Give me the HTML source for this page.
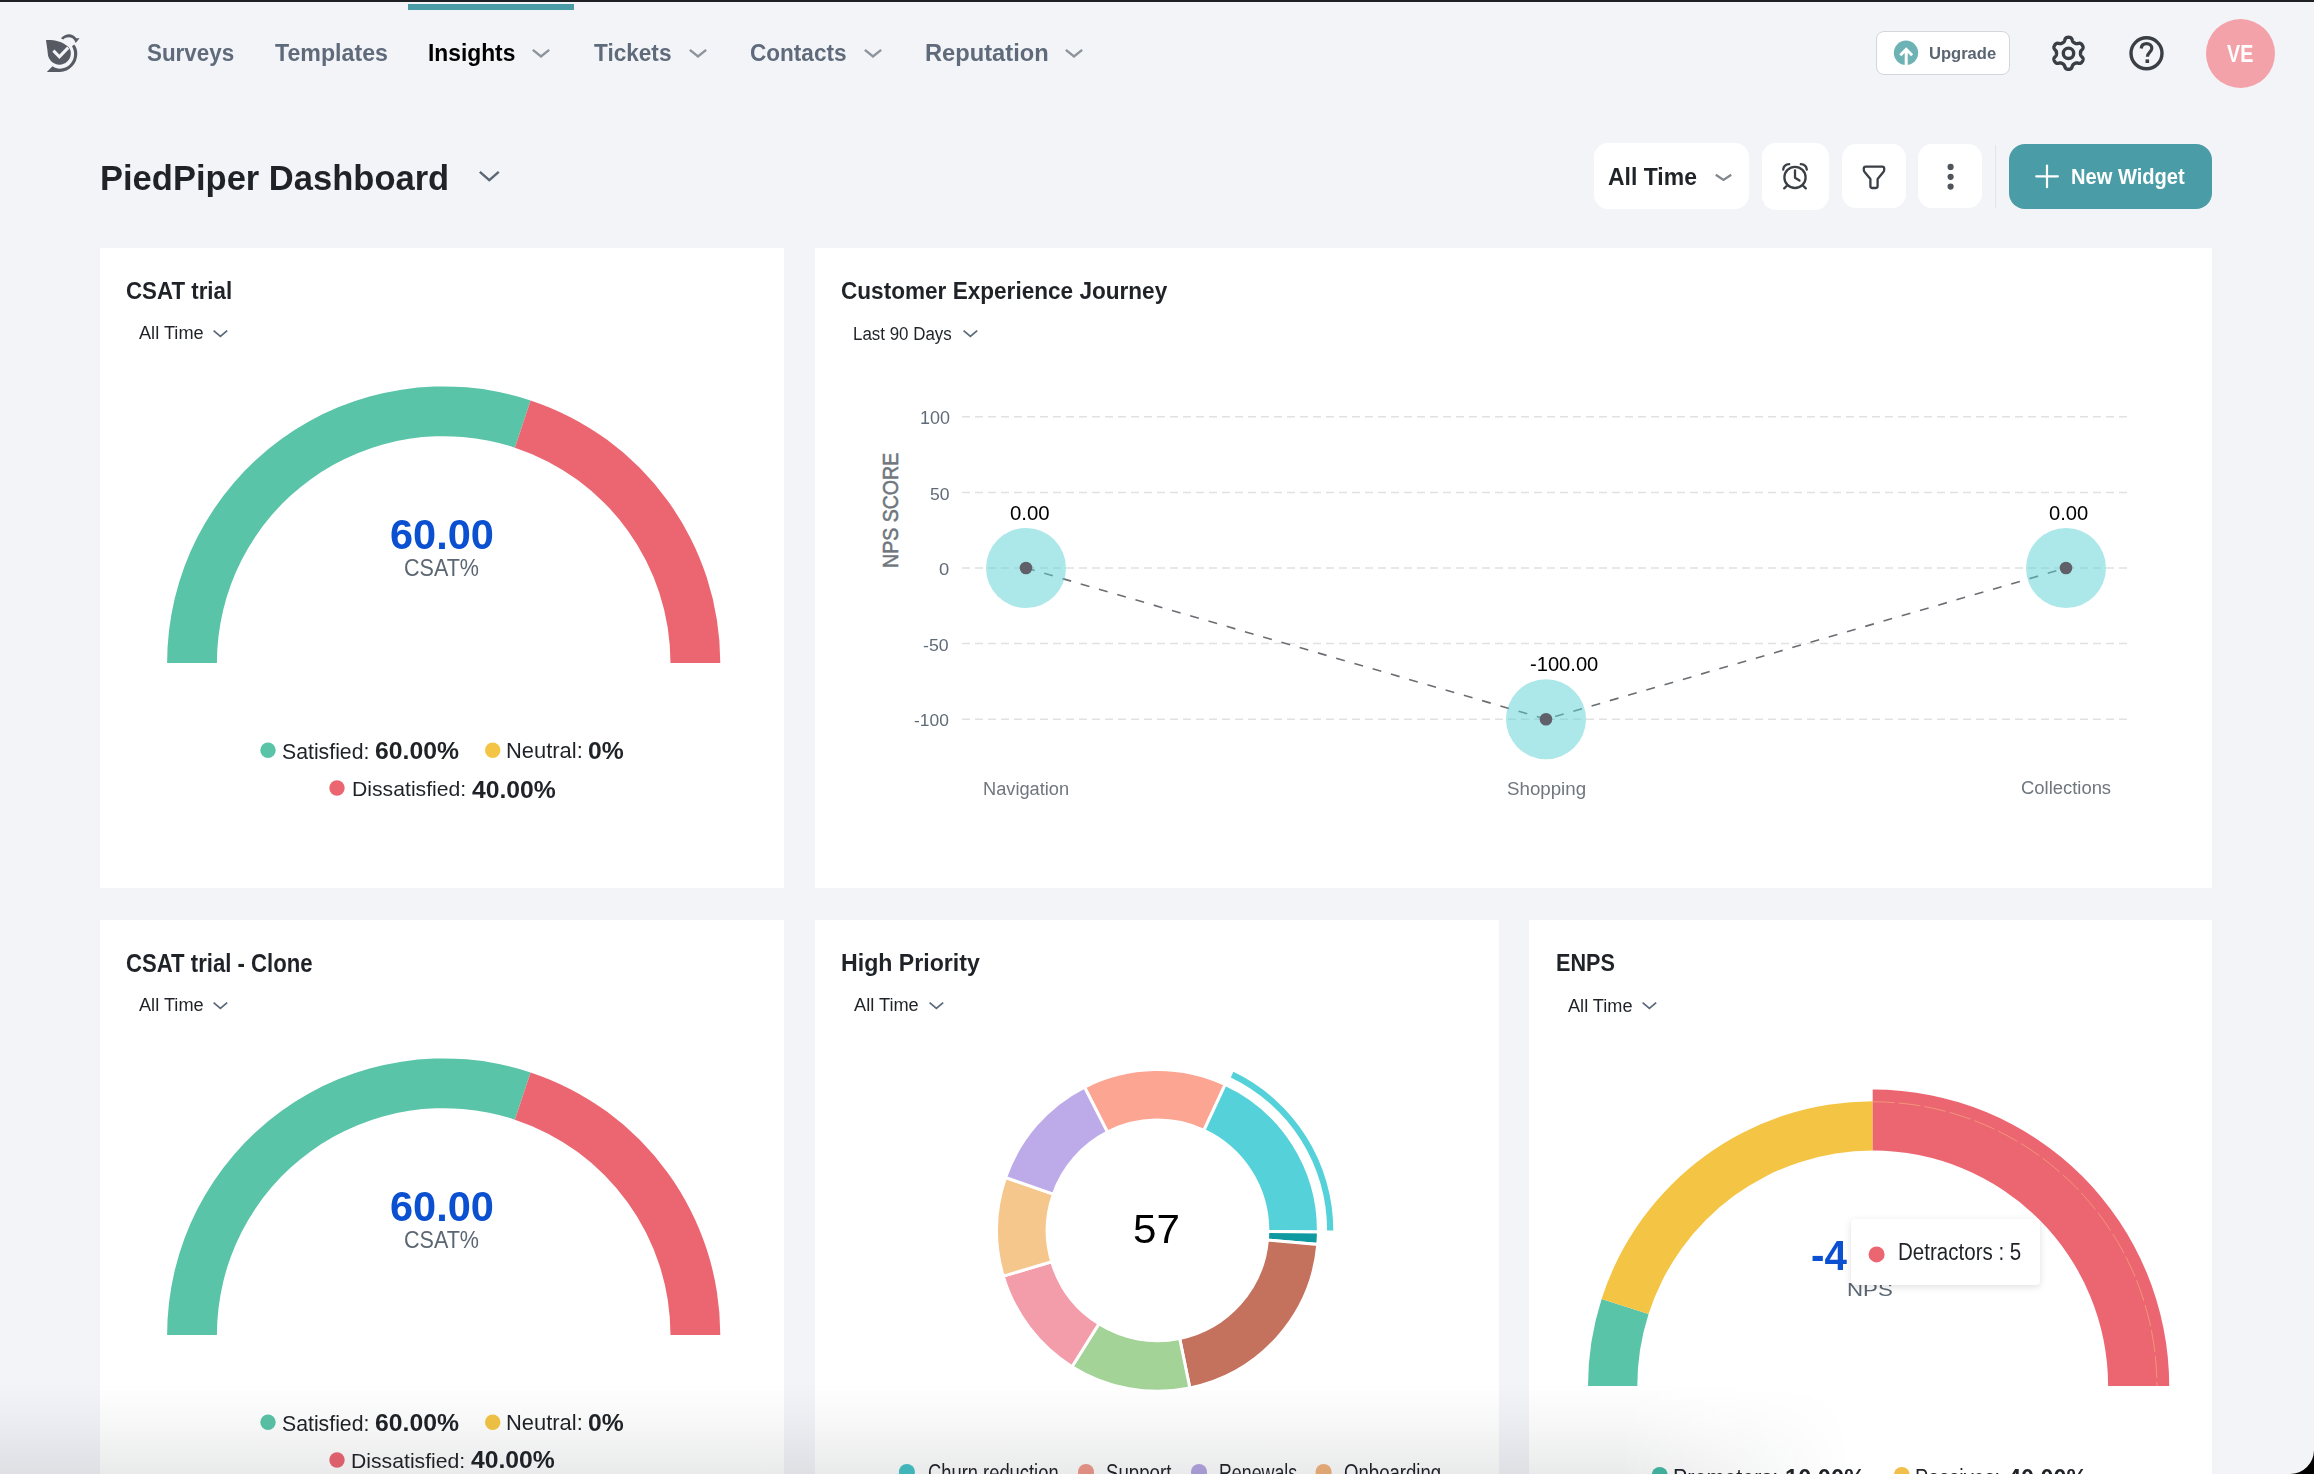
<!DOCTYPE html>
<html><head><meta charset="utf-8"><title>PiedPiper Dashboard</title>
<style>
html,body{margin:0;padding:0;}
body{width:2314px;height:1474px;overflow:hidden;position:relative;background:#f3f4f8;font-family:"Liberation Sans",sans-serif;}
.a{position:absolute;}
.t{position:absolute;white-space:pre;transform-origin:0 0;font-family:"Liberation Sans",sans-serif;}
svg.a{overflow:visible;}
</style></head><body>
<div class='a' style='left:0;top:0;width:2314px;height:2px;background:#1d2025'></div>
<div class='a' style='left:408px;top:4px;width:166px;height:6px;background:#4a9ca6'></div>
<svg class='a' style='left:38px;top:26px' width='50' height='52' viewBox='0 0 50 52'>
<g fill='#555a63'>
<path d='M8,14 C15,13.6 24,15 30,20.6 C32.4,23 33,25.5 32.8,28 C32.4,34 27.4,38.7 21.5,38.7 C15.3,38.7 10.2,33.8 9.8,27.8 C9.5,23 8.4,18 8,14 Z'/>
<path d='M22.9,12.3 C25.5,9.3 29,8 31.5,8.2 C34.8,8.5 37.3,10.3 38.3,12.3 L41.6,12.3 L37.6,17 C37.2,15.8 36.8,14.8 36,13.8 C34.6,12 32.6,11.3 30.8,11.3 C28.6,11.3 26.5,12.2 25.3,13.4 Z'/>
<path d='M36.2,18.4 C38.4,21 39.4,24.5 39.3,28 C39.1,37.8 31.4,45.9 22,45.9 L8.8,45.9 L14.5,40.2 C16.5,41.8 19,42.7 22,42.7 C29.7,42.7 36,36.3 36.1,28.3 C36.2,25.3 35.3,22.5 34,20.3 Z'/>
</g>
<polyline points='15.4,24.6 21.4,30.8 30.2,21.6' fill='none' stroke='#f3f4f8' stroke-width='3'/>
</svg>

<svg class='a' style='left:528px;top:44.8px' width='26' height='17.200000000000003'><polyline points='4.85,4.85 13.00,11.50 21.15,4.85' fill='none' stroke='#8d949c' stroke-width='2.4' stroke-linecap='butt' stroke-linejoin='miter'/></svg>
<svg class='a' style='left:685px;top:44.8px' width='26' height='17.200000000000003'><polyline points='4.85,4.85 13.00,11.50 21.15,4.85' fill='none' stroke='#8d949c' stroke-width='2.4' stroke-linecap='butt' stroke-linejoin='miter'/></svg>
<svg class='a' style='left:860px;top:44.8px' width='26' height='17.200000000000003'><polyline points='4.85,4.85 13.00,11.50 21.15,4.85' fill='none' stroke='#8d949c' stroke-width='2.4' stroke-linecap='butt' stroke-linejoin='miter'/></svg>
<svg class='a' style='left:1061px;top:44.8px' width='26' height='17.200000000000003'><polyline points='4.85,4.85 13.00,11.50 21.15,4.85' fill='none' stroke='#8d949c' stroke-width='2.4' stroke-linecap='butt' stroke-linejoin='miter'/></svg>
<div class='a' style='left:1876px;top:31px;width:131.5px;height:41.5px;border:1px solid #d3d6da;border-radius:8px;background:#fff'></div>
<svg class='a' style='left:0;top:0' width='2314' height='100'>
<circle cx='1906' cy='52.8' r='12.2' fill='#6db3b6'/>
<path d='M1906.2,65 L1906.2,49.5 M1900.3,55.2 L1906.2,49.3 L1912.1,55.2' fill='none' stroke='#fff' stroke-width='3'/>
<g transform='translate(2068.5,53.3)' fill='none' stroke='#3a3f45' stroke-width='3.4' stroke-linejoin='round'>
<path d='M12.00,0.00 L12.00,0.21 L12.00,0.42 L12.01,0.63 L12.02,0.84 L12.04,1.05 L12.07,1.27 L12.11,1.49 L12.17,1.71 L12.25,1.94 L12.37,2.18 L12.52,2.43 L12.72,2.70 L12.96,2.99 L13.24,3.30 L13.52,3.62 L13.80,3.96 L14.05,4.30 L14.26,4.63 L14.41,4.96 L14.51,5.28 L14.56,5.59 L14.57,5.89 L14.55,6.17 L14.50,6.45 L14.42,6.73 L14.33,6.99 L14.23,7.25 L14.12,7.51 L13.99,7.76 L13.86,8.00 L13.71,8.24 L13.56,8.47 L13.40,8.70 L13.22,8.92 L13.04,9.13 L12.84,9.33 L12.62,9.51 L12.38,9.67 L12.12,9.81 L11.83,9.93 L11.50,10.00 L11.14,10.03 L10.75,10.02 L10.33,9.97 L9.90,9.90 L9.48,9.81 L9.07,9.73 L8.70,9.67 L8.37,9.63 L8.07,9.62 L7.81,9.64 L7.56,9.68 L7.34,9.74 L7.13,9.82 L6.93,9.90 L6.74,9.99 L6.55,10.09 L6.37,10.19 L6.18,10.29 L6.00,10.39 L5.82,10.50 L5.64,10.61 L5.46,10.72 L5.28,10.83 L5.11,10.95 L4.94,11.08 L4.77,11.23 L4.60,11.39 L4.45,11.58 L4.30,11.80 L4.15,12.06 L4.02,12.37 L3.89,12.72 L3.76,13.11 L3.62,13.52 L3.47,13.93 L3.31,14.32 L3.12,14.67 L2.91,14.96 L2.68,15.21 L2.44,15.40 L2.19,15.56 L1.93,15.68 L1.66,15.78 L1.39,15.85 L1.11,15.91 L0.84,15.95 L0.56,15.98 L0.28,15.99 L0.00,16.00 L-0.28,15.99 L-0.56,15.98 L-0.84,15.95 L-1.11,15.91 L-1.39,15.85 L-1.66,15.78 L-1.93,15.68 L-2.19,15.56 L-2.44,15.40 L-2.68,15.21 L-2.91,14.96 L-3.12,14.67 L-3.31,14.32 L-3.47,13.93 L-3.62,13.52 L-3.76,13.11 L-3.89,12.72 L-4.02,12.37 L-4.15,12.06 L-4.30,11.80 L-4.45,11.58 L-4.60,11.39 L-4.77,11.23 L-4.94,11.08 L-5.11,10.95 L-5.28,10.83 L-5.46,10.72 L-5.64,10.61 L-5.82,10.50 L-6.00,10.39 L-6.18,10.29 L-6.37,10.19 L-6.55,10.09 L-6.74,9.99 L-6.93,9.90 L-7.13,9.82 L-7.34,9.74 L-7.56,9.68 L-7.81,9.64 L-8.07,9.62 L-8.37,9.63 L-8.70,9.67 L-9.07,9.73 L-9.48,9.81 L-9.90,9.90 L-10.33,9.97 L-10.75,10.02 L-11.14,10.03 L-11.50,10.00 L-11.83,9.93 L-12.12,9.81 L-12.38,9.67 L-12.62,9.51 L-12.84,9.33 L-13.04,9.13 L-13.22,8.92 L-13.40,8.70 L-13.56,8.47 L-13.71,8.24 L-13.86,8.00 L-13.99,7.76 L-14.12,7.51 L-14.23,7.25 L-14.33,6.99 L-14.42,6.73 L-14.50,6.45 L-14.55,6.17 L-14.57,5.89 L-14.56,5.59 L-14.51,5.28 L-14.41,4.96 L-14.26,4.63 L-14.05,4.30 L-13.80,3.96 L-13.52,3.62 L-13.24,3.30 L-12.96,2.99 L-12.72,2.70 L-12.52,2.43 L-12.37,2.18 L-12.25,1.94 L-12.17,1.71 L-12.11,1.49 L-12.07,1.27 L-12.04,1.05 L-12.02,0.84 L-12.01,0.63 L-12.00,0.42 L-12.00,0.21 L-12.00,0.00 L-12.00,-0.21 L-12.00,-0.42 L-12.01,-0.63 L-12.02,-0.84 L-12.04,-1.05 L-12.07,-1.27 L-12.11,-1.49 L-12.17,-1.71 L-12.25,-1.94 L-12.37,-2.18 L-12.52,-2.43 L-12.72,-2.70 L-12.96,-2.99 L-13.24,-3.30 L-13.52,-3.62 L-13.80,-3.96 L-14.05,-4.30 L-14.26,-4.63 L-14.41,-4.96 L-14.51,-5.28 L-14.56,-5.59 L-14.57,-5.89 L-14.55,-6.17 L-14.50,-6.45 L-14.42,-6.73 L-14.33,-6.99 L-14.23,-7.25 L-14.12,-7.51 L-13.99,-7.76 L-13.86,-8.00 L-13.71,-8.24 L-13.56,-8.47 L-13.40,-8.70 L-13.22,-8.92 L-13.04,-9.13 L-12.84,-9.33 L-12.62,-9.51 L-12.38,-9.67 L-12.12,-9.81 L-11.83,-9.93 L-11.50,-10.00 L-11.14,-10.03 L-10.75,-10.02 L-10.33,-9.97 L-9.90,-9.90 L-9.48,-9.81 L-9.07,-9.73 L-8.70,-9.67 L-8.37,-9.63 L-8.07,-9.62 L-7.81,-9.64 L-7.56,-9.68 L-7.34,-9.74 L-7.13,-9.82 L-6.93,-9.90 L-6.74,-9.99 L-6.55,-10.09 L-6.37,-10.19 L-6.18,-10.29 L-6.00,-10.39 L-5.82,-10.50 L-5.64,-10.61 L-5.46,-10.72 L-5.28,-10.83 L-5.11,-10.95 L-4.94,-11.08 L-4.77,-11.23 L-4.60,-11.39 L-4.45,-11.58 L-4.30,-11.80 L-4.15,-12.06 L-4.02,-12.37 L-3.89,-12.72 L-3.76,-13.11 L-3.62,-13.52 L-3.47,-13.93 L-3.31,-14.32 L-3.12,-14.67 L-2.91,-14.96 L-2.68,-15.21 L-2.44,-15.40 L-2.19,-15.56 L-1.93,-15.68 L-1.66,-15.78 L-1.39,-15.85 L-1.11,-15.91 L-0.84,-15.95 L-0.56,-15.98 L-0.28,-15.99 L-0.00,-16.00 L0.28,-15.99 L0.56,-15.98 L0.84,-15.95 L1.11,-15.91 L1.39,-15.85 L1.66,-15.78 L1.93,-15.68 L2.19,-15.56 L2.44,-15.40 L2.68,-15.21 L2.91,-14.96 L3.12,-14.67 L3.31,-14.32 L3.47,-13.93 L3.62,-13.52 L3.76,-13.11 L3.89,-12.72 L4.02,-12.37 L4.15,-12.06 L4.30,-11.80 L4.45,-11.58 L4.60,-11.39 L4.77,-11.23 L4.94,-11.08 L5.11,-10.95 L5.28,-10.83 L5.46,-10.72 L5.64,-10.61 L5.82,-10.50 L6.00,-10.39 L6.18,-10.29 L6.37,-10.19 L6.55,-10.09 L6.74,-9.99 L6.93,-9.90 L7.13,-9.82 L7.34,-9.74 L7.56,-9.68 L7.81,-9.64 L8.07,-9.62 L8.37,-9.63 L8.70,-9.67 L9.07,-9.73 L9.48,-9.81 L9.90,-9.90 L10.33,-9.97 L10.75,-10.02 L11.14,-10.03 L11.50,-10.00 L11.83,-9.93 L12.12,-9.81 L12.38,-9.67 L12.62,-9.51 L12.84,-9.33 L13.04,-9.13 L13.22,-8.92 L13.40,-8.70 L13.56,-8.47 L13.71,-8.24 L13.86,-8.00 L13.99,-7.76 L14.12,-7.51 L14.23,-7.25 L14.33,-6.99 L14.42,-6.73 L14.50,-6.45 L14.55,-6.17 L14.57,-5.89 L14.56,-5.59 L14.51,-5.28 L14.41,-4.96 L14.26,-4.63 L14.05,-4.30 L13.80,-3.96 L13.52,-3.62 L13.24,-3.30 L12.96,-2.99 L12.72,-2.70 L12.52,-2.43 L12.37,-2.18 L12.25,-1.94 L12.17,-1.71 L12.11,-1.49 L12.07,-1.27 L12.04,-1.05 L12.02,-0.84 L12.01,-0.63 L12.00,-0.42 L12.00,-0.21 L12.00,-0.00 Z'/>
<circle cx='0' cy='0' r='5.2'/>
</g>
<circle cx='2146.5' cy='53.3' r='15.5' fill='none' stroke='#3a3f45' stroke-width='3.4'/>
<path d='M2141.2,48.5 C2141.5,45.2 2143.8,43.6 2146.6,43.6 C2149.6,43.6 2151.8,45.6 2151.8,48.3 C2151.8,51.9 2147.4,52.3 2147.4,56.8' fill='none' stroke='#3a3f45' stroke-width='3.2'/>
<rect x='2145.5' y='59.4' width='3.6' height='3.6' fill='#3a3f45'/>
</svg>

<div class='a' style='left:2206px;top:18.5px;width:69px;height:69px;border-radius:50%;background:#f4a2a9'></div>
<svg class='a' style='left:475.2px;top:167.2px' width='28.600000000000023' height='18.900000000000006'><polyline points='4.85,4.85 14.30,13.20 23.75,4.85' fill='none' stroke='#5b6773' stroke-width='2.4' stroke-linecap='butt' stroke-linejoin='miter'/></svg>
<div class='a' style='left:1594px;top:143px;width:155px;height:66px;border-radius:14px;background:#fff'></div>
<svg class='a' style='left:1710.5px;top:169.5px' width='25.0' height='15.5'><polyline points='4.78,4.78 12.50,9.94 20.22,4.78' fill='none' stroke='#80878e' stroke-width='2.2' stroke-linecap='butt' stroke-linejoin='miter'/></svg>
<div class='a' style='left:1762px;top:143px;width:67px;height:67px;border-radius:14px;background:#fff'></div>
<div class='a' style='left:1842px;top:144px;width:64px;height:64px;border-radius:14px;background:#fff'></div>
<div class='a' style='left:1918px;top:144px;width:64px;height:64px;border-radius:14px;background:#fff'></div>
<div class='a' style='left:1994.5px;top:145px;width:1px;height:63px;background:#e3e5ea'></div>
<div class='a' style='left:2009px;top:144px;width:203px;height:64.6px;border-radius:16px;background:#4a9ca6'></div>
<svg class='a' style='left:0;top:0' width='2314' height='260'>
<g fill='none' stroke='#3a3f45' stroke-width='2.3' stroke-linecap='round' stroke-linejoin='round'>
<circle cx='1795' cy='177.4' r='10.6'/>
<polyline points='1795,170.5 1795,177.8 1799.5,180.6'/>
<path d='M1783.2,169.5 C1783.6,166.5 1786,164.3 1789.2,164.2'/>
<path d='M1806.8,169.5 C1806.4,166.5 1804,164.3 1800.8,164.2'/>
<line x1='1787.2' y1='185.5' x2='1784.2' y2='188.4'/>
<line x1='1802.8' y1='185.5' x2='1805.8' y2='188.4'/>
<path d='M1865.8,166.6 L1882.2,166.6 Q1884.2,166.6 1884.2,168.6 L1884.2,170 Q1884.2,171.2 1883.2,172.2 L1877.6,179 L1877.6,186 Q1877.6,188 1875.6,188 L1872.4,188 Q1870.4,188 1870.4,186 L1870.4,179 L1864.8,172.2 Q1863.8,171.2 1863.8,170 L1863.8,168.6 Q1863.8,166.6 1865.8,166.6 Z'/>
</g>
<g fill='#50555c'>
<circle cx='1950.6' cy='166.9' r='3.1'/>
<circle cx='1950.6' cy='176.8' r='3.1'/>
<circle cx='1950.6' cy='186.6' r='3.1'/>
</g>
<g stroke='#fff' stroke-width='2.2' stroke-linecap='round'>
<line x1='2047' y1='165.5' x2='2047' y2='187.2'/>
<line x1='2036.2' y1='176.3' x2='2057.9' y2='176.3'/>
</g>
</svg>

<div class='a' style='left:100px;top:248px;width:684px;height:640px;background:#fff'></div>
<div class='a' style='left:815px;top:248px;width:1397px;height:640px;background:#fff'></div>
<div class='a' style='left:100px;top:920px;width:684px;height:554px;background:#fff'></div>
<div class='a' style='left:815px;top:920px;width:684px;height:554px;background:#fff'></div>
<div class='a' style='left:1529px;top:920px;width:683px;height:554px;background:#fff'></div>
<svg class='a' style='left:209px;top:326px' width='22.80000000000001' height='15.600000000000023'><polyline points='4.64,4.64 11.40,10.33 18.16,4.64' fill='none' stroke='#5b6a7a' stroke-width='1.8' stroke-linecap='butt' stroke-linejoin='miter'/></svg>
<svg class='a' style='left:959px;top:326px' width='22.799999999999955' height='15.600000000000023'><polyline points='4.64,4.64 11.40,10.33 18.16,4.64' fill='none' stroke='#5b6a7a' stroke-width='1.8' stroke-linecap='butt' stroke-linejoin='miter'/></svg>
<svg class='a' style='left:209px;top:998px' width='22.80000000000001' height='15.600000000000023'><polyline points='4.64,4.64 11.40,10.33 18.16,4.64' fill='none' stroke='#5b6a7a' stroke-width='1.8' stroke-linecap='butt' stroke-linejoin='miter'/></svg>
<svg class='a' style='left:925px;top:998px' width='22.799999999999955' height='15.600000000000023'><polyline points='4.64,4.64 11.40,10.33 18.16,4.64' fill='none' stroke='#5b6a7a' stroke-width='1.8' stroke-linecap='butt' stroke-linejoin='miter'/></svg>
<svg class='a' style='left:1638px;top:998px' width='22.799999999999955' height='15.600000000000023'><polyline points='4.64,4.64 11.40,10.33 18.16,4.64' fill='none' stroke='#5b6a7a' stroke-width='1.8' stroke-linecap='butt' stroke-linejoin='miter'/></svg>
<svg class='a' style='left:0;top:0' width='2314' height='1474'><path d='M167.10,663.00 A276.6,276.6 0 0 1 530.55,400.39 L514.91,447.67 A226.8,226.8 0 0 0 216.90,663.00 Z' fill='#5ac4a8'/><path d='M530.55,400.39 A276.6,276.6 0 0 1 720.30,663.00 L670.50,663.00 A226.8,226.8 0 0 0 514.91,447.67 Z' fill='#ec6672'/><path d='M167.10,1335.00 A276.6,276.6 0 0 1 530.55,1072.39 L514.91,1119.67 A226.8,226.8 0 0 0 216.90,1335.00 Z' fill='#5ac4a8'/><path d='M530.55,1072.39 A276.6,276.6 0 0 1 720.30,1335.00 L670.50,1335.00 A226.8,226.8 0 0 0 514.91,1119.67 Z' fill='#ec6672'/><circle cx='268' cy='750.3' r='7.7' fill='#5ac4a8'/><circle cx='492.7' cy='750.3' r='7.7' fill='#f4c545'/><circle cx='337' cy='788' r='7.7' fill='#ec6672'/><circle cx='268' cy='1422.3' r='7.7' fill='#5ac4a8'/><circle cx='492.7' cy='1422.3' r='7.7' fill='#f4c545'/><circle cx='337' cy='1460' r='7.7' fill='#ec6672'/><line x1='962' y1='416.8' x2='2131' y2='416.8' stroke='#e1e1e1' stroke-width='1.5' stroke-dasharray='8 5'/>
<line x1='962' y1='492.4' x2='2131' y2='492.4' stroke='#e1e1e1' stroke-width='1.5' stroke-dasharray='8 5'/>
<line x1='962' y1='568' x2='2131' y2='568' stroke='#e1e1e1' stroke-width='1.5' stroke-dasharray='8 5'/>
<line x1='962' y1='643.6' x2='2131' y2='643.6' stroke='#e1e1e1' stroke-width='1.5' stroke-dasharray='8 5'/>
<line x1='962' y1='719.2' x2='2131' y2='719.2' stroke='#e1e1e1' stroke-width='1.5' stroke-dasharray='8 5'/>
<polyline points='1026,568 1546,719.2 2066,568' fill='none' stroke='#6a6e73' stroke-width='1.6' stroke-dasharray='9 10'/>
<circle cx='1026' cy='568' r='40' fill='rgb(90,208,212)' fill-opacity='0.5'/>
<circle cx='1026' cy='568' r='6.3' fill='#5f6069'/>
<circle cx='1546' cy='719.2' r='40' fill='rgb(90,208,212)' fill-opacity='0.5'/>
<circle cx='1546' cy='719.2' r='6.3' fill='#5f6069'/>
<circle cx='2066' cy='568' r='40' fill='rgb(90,208,212)' fill-opacity='0.5'/>
<circle cx='2066' cy='568' r='6.3' fill='#5f6069'/><path d='M1084.45,1087.04 A160.9,160.9 0 0 1 1225.24,1084.46 L1203.94,1130.35 A110.3,110.3 0 0 0 1107.42,1132.12 Z' fill='#fca592' stroke='#fff' stroke-width='3' stroke-linejoin='miter'/>
<path d='M1225.24,1084.46 A160.9,160.9 0 0 1 1318.39,1232.08 L1267.79,1231.56 A110.3,110.3 0 0 0 1203.94,1130.35 Z' fill='#55d1d9' stroke='#fff' stroke-width='3' stroke-linejoin='miter'/>
<path d='M1318.39,1232.08 A160.9,160.9 0 0 1 1317.79,1244.42 L1267.38,1240.01 A110.3,110.3 0 0 0 1267.79,1231.56 Z' fill='#0e9aa0' stroke='#fff' stroke-width='3' stroke-linejoin='miter'/>
<path d='M1317.79,1244.42 A160.9,160.9 0 0 1 1189.85,1388.01 L1179.68,1338.45 A110.3,110.3 0 0 0 1267.38,1240.01 Z' fill='#c4715e' stroke='#fff' stroke-width='3' stroke-linejoin='miter'/>
<path d='M1189.85,1388.01 A160.9,160.9 0 0 1 1072.00,1366.70 L1098.89,1323.84 A110.3,110.3 0 0 0 1179.68,1338.45 Z' fill='#a3d396' stroke='#fff' stroke-width='3' stroke-linejoin='miter'/>
<path d='M1072.00,1366.70 A160.9,160.9 0 0 1 1003.23,1276.10 L1051.74,1261.73 A110.3,110.3 0 0 0 1098.89,1323.84 Z' fill='#f39dab' stroke='#fff' stroke-width='3' stroke-linejoin='miter'/>
<path d='M1003.23,1276.10 A160.9,160.9 0 0 1 1005.55,1177.49 L1053.34,1194.13 A110.3,110.3 0 0 0 1051.74,1261.73 Z' fill='#f5c78d' stroke='#fff' stroke-width='3' stroke-linejoin='miter'/>
<path d='M1005.55,1177.49 A160.9,160.9 0 0 1 1084.45,1087.04 L1107.42,1132.12 A110.3,110.3 0 0 0 1053.34,1194.13 Z' fill='#bdaae8' stroke='#fff' stroke-width='3' stroke-linejoin='miter'/>
<path d='M1233.46,1071.86 A175.8,175.8 0 0 1 1333.30,1230.40 L1327.10,1230.40 A169.6,169.6 0 0 0 1230.78,1077.45 Z' fill='#55d1d9'/><path d='M1588.00,1386.00 A284.7,284.7 0 0 1 1601.63,1298.97 L1648.57,1314.04 A235.4,235.4 0 0 0 1637.30,1386.00 Z' fill='#5ac4a8'/><path d='M1601.63,1298.97 A284.7,284.7 0 0 1 1872.70,1101.30 L1872.70,1150.60 A235.4,235.4 0 0 0 1648.57,1314.04 Z' fill='#f4c545'/><path d='M1872.70,1089.50 A296.5,296.5 0 0 1 2169.20,1386.00 L2108.10,1386.00 A235.4,235.4 0 0 0 1872.70,1150.60 Z' fill='#ec6672'/><path d='M1872.70,1101.80 A284.2,284.2 0 0 1 2156.90,1386.00' fill='none' stroke='#f4c37a' stroke-opacity='0.7' stroke-width='0.7' stroke-dasharray='22 4'/></svg>
<div class='t' style='left:146.97px;top:41.33px;font-size:24.06px;line-height:24.06px;font-weight:700;color:#5f6b7a;transform:scaleX(0.9314);'>Surveys</div>
<div class='t' style='left:274.85px;top:41.16px;font-size:24.78px;line-height:24.78px;font-weight:700;color:#5f6b7a;transform:scaleX(0.9359);'>Templates</div>
<div class='t' style='left:427.52px;top:41.16px;font-size:24.78px;line-height:24.78px;font-weight:700;color:#000000;transform:scaleX(0.9198);'>Insights</div>
<div class='t' style='left:594.13px;top:41.32px;font-size:24.78px;line-height:24.78px;font-weight:700;color:#5f6b7a;transform:scaleX(0.9121);'>Tickets</div>
<div class='t' style='left:750.28px;top:41.21px;font-size:24.06px;line-height:24.06px;font-weight:700;color:#5f6b7a;transform:scaleX(0.9382);'>Contacts</div>
<div class='t' style='left:925.04px;top:41.16px;font-size:24.78px;line-height:24.78px;font-weight:700;color:#5f6b7a;transform:scaleX(0.9561);'>Reputation</div>
<div class='t' style='left:1929.37px;top:45.60px;font-size:16.81px;line-height:16.81px;font-weight:700;color:#5a6572;transform:scaleX(0.9854);'>Upgrade</div>
<div class='t' style='left:2227.16px;top:43.26px;font-size:23.48px;line-height:23.48px;font-weight:700;color:#ffffff;transform:scaleX(0.8386);'>VE</div>
<div class='t' style='left:99.66px;top:159.73px;font-size:35.94px;line-height:35.94px;font-weight:700;color:#1f2328;transform:scaleX(0.9612);'>PiedPiper Dashboard</div>
<div class='t' style='left:1607.61px;top:165.15px;font-size:24.35px;line-height:24.35px;font-weight:700;color:#1f2328;transform:scaleX(0.9432);'>All Time</div>
<div class='t' style='left:2070.95px;top:164.90px;font-size:22.75px;line-height:22.75px;font-weight:700;color:#ffffff;transform:scaleX(0.8837);'>New Widget</div>
<div class='t' style='left:125.83px;top:279.15px;font-size:24.35px;line-height:24.35px;font-weight:700;color:#1f2328;transform:scaleX(0.9159);'>CSAT trial</div>
<div class='t' style='left:841.16px;top:279.05px;font-size:23.77px;line-height:23.77px;font-weight:700;color:#1f2328;transform:scaleX(0.9499);'>Customer Experience Journey</div>
<div class='t' style='left:126.01px;top:950.65px;font-size:24.93px;line-height:24.93px;font-weight:700;color:#1f2328;transform:scaleX(0.8883);'>CSAT trial - Clone</div>
<div class='t' style='left:841.38px;top:950.86px;font-size:24.35px;line-height:24.35px;font-weight:700;color:#1f2328;transform:scaleX(0.9505);'>High Priority</div>
<div class='t' style='left:1555.62px;top:951.00px;font-size:24.35px;line-height:24.35px;font-weight:700;color:#1f2328;transform:scaleX(0.8891);'>ENPS</div>
<div class='t' style='left:139.08px;top:324.19px;font-size:18.41px;line-height:18.41px;font-weight:400;color:#1f2328;transform:scaleX(0.9875);'>All Time</div>
<div class='t' style='left:853.22px;top:324.03px;font-size:19.13px;line-height:19.13px;font-weight:400;color:#1f2328;transform:scaleX(0.8855);'>Last 90 Days</div>
<div class='t' style='left:139.08px;top:996.19px;font-size:18.41px;line-height:18.41px;font-weight:400;color:#1f2328;transform:scaleX(0.9875);'>All Time</div>
<div class='t' style='left:853.64px;top:996.19px;font-size:18.41px;line-height:18.41px;font-weight:400;color:#1f2328;transform:scaleX(0.9891);'>All Time</div>
<div class='t' style='left:1567.52px;top:996.82px;font-size:18.70px;line-height:18.70px;font-weight:400;color:#1f2328;transform:scaleX(0.9707);'>All Time</div>
<div class='t' style='left:389.68px;top:513.02px;font-size:42.61px;line-height:42.61px;font-weight:700;color:#0b50d0;transform:scaleX(0.9747);'>60.00</div>
<div class='t' style='left:404.32px;top:555.86px;font-size:24.64px;line-height:24.64px;font-weight:400;color:#5c6773;transform:scaleX(0.8750);'>CSAT%</div>
<div class='t' style='left:282.24px;top:741.75px;font-size:21.30px;line-height:21.30px;font-weight:400;color:#1f2328;transform:scaleX(0.9979);'>Satisfied:</div>
<div class='t' style='left:375.33px;top:738.80px;font-size:23.77px;line-height:23.77px;font-weight:700;color:#1f2328;transform:scaleX(1.0417);'>60.00%</div>
<div class='t' style='left:506.25px;top:741.33px;font-size:21.30px;line-height:21.30px;font-weight:400;color:#1f2328;transform:scaleX(1.0290);'>Neutral:</div>
<div class='t' style='left:588.21px;top:738.80px;font-size:23.77px;line-height:23.77px;font-weight:700;color:#1f2328;transform:scaleX(1.0396);'>0%</div>
<div class='t' style='left:351.62px;top:777.89px;font-size:21.01px;line-height:21.01px;font-weight:400;color:#1f2328;transform:scaleX(1.0092);'>Dissatisfied:</div>
<div class='t' style='left:471.55px;top:778.70px;font-size:23.48px;line-height:23.48px;font-weight:700;color:#1f2328;transform:scaleX(1.0533);'>40.00%</div>
<div class='t' style='left:389.68px;top:1185.02px;font-size:42.61px;line-height:42.61px;font-weight:700;color:#0b50d0;transform:scaleX(0.9747);'>60.00</div>
<div class='t' style='left:404.32px;top:1227.86px;font-size:24.64px;line-height:24.64px;font-weight:400;color:#5c6773;transform:scaleX(0.8750);'>CSAT%</div>
<div class='t' style='left:282.24px;top:1413.75px;font-size:21.30px;line-height:21.30px;font-weight:400;color:#1f2328;transform:scaleX(0.9979);'>Satisfied:</div>
<div class='t' style='left:375.33px;top:1410.80px;font-size:23.77px;line-height:23.77px;font-weight:700;color:#1f2328;transform:scaleX(1.0417);'>60.00%</div>
<div class='t' style='left:506.25px;top:1413.33px;font-size:21.30px;line-height:21.30px;font-weight:400;color:#1f2328;transform:scaleX(1.0290);'>Neutral:</div>
<div class='t' style='left:588.21px;top:1410.80px;font-size:23.77px;line-height:23.77px;font-weight:700;color:#1f2328;transform:scaleX(1.0396);'>0%</div>
<div class='t' style='left:351.30px;top:1449.94px;font-size:21.01px;line-height:21.01px;font-weight:400;color:#1f2328;transform:scaleX(1.0092);'>Dissatisfied:</div>
<div class='t' style='left:470.91px;top:1448.94px;font-size:23.48px;line-height:23.48px;font-weight:700;color:#1f2328;transform:scaleX(1.0533);'>40.00%</div>
<div class='t' style='left:919.65px;top:410.29px;font-size:17.68px;line-height:17.68px;font-weight:400;color:#5f6b78;transform:scaleX(1.0144);'>100</div>
<div class='t' style='left:929.80px;top:485.94px;font-size:17.39px;line-height:17.39px;font-weight:400;color:#5f6b78;transform:scaleX(1.0104);'>50</div>
<div class='t' style='left:938.55px;top:561.02px;font-size:17.39px;line-height:17.39px;font-weight:400;color:#5f6b78;transform:scaleX(1.0542);'>0</div>
<div class='t' style='left:923.33px;top:638.19px;font-size:16.81px;line-height:16.81px;font-weight:400;color:#5f6b78;transform:scaleX(1.0507);'>-50</div>
<div class='t' style='left:914.22px;top:712.61px;font-size:16.67px;line-height:16.67px;font-weight:400;color:#5f6b78;transform:scaleX(1.0437);'>-100</div>
<div class='t' style='left:1009.63px;top:502.51px;font-size:20.58px;line-height:20.58px;font-weight:400;color:#000000;transform:scaleX(0.9900);'>0.00</div>
<div class='t' style='left:1529.91px;top:653.04px;font-size:21.01px;line-height:21.01px;font-weight:400;color:#000000;transform:scaleX(0.9589);'>-100.00</div>
<div class='t' style='left:2049.01px;top:502.51px;font-size:20.58px;line-height:20.58px;font-weight:400;color:#000000;transform:scaleX(0.9796);'>0.00</div>
<div class='t' style='left:983.04px;top:779.62px;font-size:18.41px;line-height:18.41px;font-weight:400;color:#6f767e;transform:scaleX(0.9905);'>Navigation</div>
<div class='t' style='left:1506.86px;top:779.62px;font-size:18.41px;line-height:18.41px;font-weight:400;color:#6f767e;transform:scaleX(1.0166);'>Shopping</div>
<div class='t' style='left:2020.92px;top:779.33px;font-size:18.41px;line-height:18.41px;font-weight:400;color:#6f767e;transform:scaleX(1.0006);'>Collections</div>
<div class='t' style='left:1133.31px;top:1208.63px;font-size:40.72px;line-height:40.72px;font-weight:400;color:#000000;transform:scaleX(1.0352);'>57</div>
<div class='t' style='left:1810.97px;top:1234.91px;font-size:42.32px;line-height:42.32px;font-weight:700;color:#0b50d0;transform:scaleX(0.9536);'>-4</div>
<div class='t' style='left:1847.22px;top:1282.08px;font-size:17.97px;line-height:17.97px;font-weight:400;color:#5c6773;transform:scaleX(1.2398);'>NPS</div>
<div class='t' style='left:927.88px;top:1461.30px;font-size:24.35px;line-height:24.35px;font-weight:400;color:#1f2328;transform:scaleX(0.7540);'>Churn reduction</div>
<div class='t' style='left:1106.07px;top:1461.30px;font-size:24.35px;line-height:24.35px;font-weight:400;color:#1f2328;transform:scaleX(0.7667);'>Support</div>
<div class='t' style='left:1218.58px;top:1461.30px;font-size:24.35px;line-height:24.35px;font-weight:400;color:#1f2328;transform:scaleX(0.7310);'>Renewals</div>
<div class='t' style='left:1343.77px;top:1461.30px;font-size:24.35px;line-height:24.35px;font-weight:400;color:#1f2328;transform:scaleX(0.7636);'>Onboarding</div>
<div class='t' style='left:1673.28px;top:1465.77px;font-size:23.91px;line-height:23.91px;font-weight:400;color:#1f2328;transform:scaleX(0.8993);'>Promoters:</div>
<div class='t' style='left:1784.58px;top:1465.77px;font-size:23.91px;line-height:23.91px;font-weight:700;color:#1f2328;transform:scaleX(0.9884);'>10.00%</div>
<div class='t' style='left:1915.11px;top:1465.77px;font-size:23.91px;line-height:23.91px;font-weight:400;color:#1f2328;transform:scaleX(0.8323);'>Passives:</div>
<div class='t' style='left:2007.53px;top:1465.77px;font-size:23.91px;line-height:23.91px;font-weight:700;color:#1f2328;transform:scaleX(0.9766);'>40.00%</div>
<div class='a' style='left:1850.5px;top:1218.6px;width:189.7px;height:66.2px;background:#fff;border-radius:4px;box-shadow:0 2px 7px rgba(0,0,0,0.13)'></div>
<svg class='a' style='left:1860px;top:1238px' width='40' height='40'><circle cx='16.6' cy='16.4' r='8' fill='#ec6672'/></svg>
<div class='t' style='left:1897.88px;top:1240.16px;font-size:24.35px;line-height:24.35px;font-weight:400;color:#1f2328;transform:scaleX(0.8438);'>Detractors : 5</div>
<div class='t' style='left:879.46px;top:567.97px;font-size:22.75px;line-height:22.75px;font-weight:400;color:#6f767e;-webkit-text-stroke:0.55px #6f767e;transform:rotate(-90deg) scaleX(0.8599)'>NPS SCORE</div>
<svg class='a' style='left:0;top:1400px' width='2314' height='74'>
<circle cx='906.9' cy='72' r='8' fill='#45c4c8'/>
<circle cx='1086' cy='72' r='8' fill='#f19a8c'/>
<circle cx='1199' cy='72' r='8' fill='#b5a6e2'/>
<circle cx='1323.6' cy='72' r='8' fill='#f2b47c'/>
<circle cx='1659.7' cy='75' r='8' fill='#45b9a5'/>
<circle cx='1901.8' cy='75' r='8' fill='#f1c04a'/>
</svg>
<div class='a' style='left:0;top:1384px;width:2314px;height:90px;background:linear-gradient(to bottom,rgba(20,25,35,0) 0%,rgba(20,25,35,0.035) 45%,rgba(20,25,35,0.09) 100%);-webkit-mask-image:linear-gradient(to right,#000 0%,#000 70%,rgba(0,0,0,0) 80%);mask-image:linear-gradient(to right,#000 0%,#000 70%,rgba(0,0,0,0) 80%)'></div>
<svg class='a' style='left:2290px;top:1450px' width='24' height='24'><path d='M24,0 L24,24 L0,24 A24,24 0 0 0 24,0 Z' fill='#000'/></svg>
</body></html>
